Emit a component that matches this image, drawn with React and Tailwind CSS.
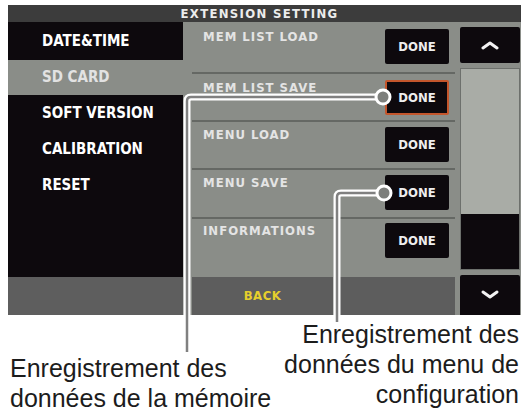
export default function App() {
  const lcd = { fontFamily: '"DejaVu Sans Condensed", "DejaVu Sans", sans-serif' };
  const menu = [
    { label: 'DATE&TIME', h: 'h-[38px]' },
    { label: 'SD CARD', h: 'h-[35px]', active: true },
    { label: 'SOFT VERSION', h: 'h-[36px]' },
    { label: 'CALIBRATION', h: 'h-[36px]' },
    { label: 'RESET', h: 'h-[36px]' },
  ];
  const rows = [
    { label: 'MEM LIST LOAD', h: 'h-[50px]', pt: 'pt-[7px]' },
    { label: 'MEM LIST SAVE', h: 'h-[48px]', pt: 'pt-[6px]', selected: true },
    { label: 'MENU LOAD', h: 'h-[48px]', pt: 'pt-[5px]' },
    { label: 'MENU SAVE', h: 'h-[49px]', pt: 'pt-[5px]' },
    { label: 'INFORMATIONS', h: 'h-[60px]', pt: 'pt-[4px]' },
  ];

  return (
    <div className="relative w-[523px] h-[412px] bg-white overflow-hidden pt-[5px] pl-[8px]">
      {/* screen */}
      <div className="w-[513px] h-[310px] bg-[#8a8d88] flex flex-col" style={lcd}>
        <div className="h-[17px] bg-[#3c3c3c] flex items-center justify-center pr-[10px] text-[13px] font-bold tracking-[1.3px] text-[#ececec] leading-none">
          EXTENSION SETTING
        </div>
        <div className="flex h-[293px]">
          {/* left menu */}
          <div className="w-[175px] bg-[#0d090d] flex flex-col">
            {menu.map((m) => (
              <div
                key={m.label}
                className={`${m.h} flex items-center pl-[34px] text-[15px] font-bold leading-none ${
                  m.active ? 'bg-[#8a8d88] text-[#e2e2e2]' : 'text-white'
                }`}
              >
                {m.label}
              </div>
            ))}
            <div className="flex-1" />
            <div className="h-[38px] bg-[#5e5e5e]" />
          </div>
          <div className="w-[9px]" />
          {/* content */}
          <div className="w-[263px] flex flex-col">
            {rows.map((r, i) => (
              <div
                key={r.label}
                className={`${r.h} ${r.pt} flex justify-between items-start pl-[11px] pr-[6px] ${
                  i > 0 ? 'border-t-2 border-[#656864]' : ''
                }`}
              >
                <span className="text-[13px] font-bold tracking-[1px] text-[#e4e4e4] leading-none mt-[1px]">{r.label}</span>
                <div
                  className={`w-[64px] h-[35px] bg-[#0d090d] rounded-[2px] flex items-center justify-center text-[13px] font-bold text-[#eeeeee] ${
                    r.selected ? 'border-2 border-[#c4562c]' : ''
                  }`}
                >
                  DONE
                </div>
              </div>
            ))}
            <div className="h-[38px] flex gap-[7px]">
              <div className="w-[141px] bg-[#5d5d5d] flex items-center justify-center text-[13px] font-bold tracking-[0.5px] text-[#e6cf2c]">
                BACK
              </div>
              <div className="flex-1 bg-[#5d5d5d]" />
            </div>
          </div>
          {/* scroll column */}
          <div className="flex-1 flex flex-col pl-[5px] pr-[1px]">
            <div className="h-[36px] mt-[5px] bg-[#0d090d] rounded-[2px] flex items-center justify-center">
              <svg width="20" height="10" viewBox="0 0 20 10">
                <polyline points="3,8 10,3 17,8" fill="none" stroke="#f2f2f2" strokeWidth="3" strokeLinecap="round" strokeLinejoin="round" />
              </svg>
            </div>
            <div className="h-[202px] mt-[5px] flex flex-col border border-[#6d706c]">
              <div className="h-[145px] bg-[#a9aca6]" />
              <div className="flex-1 bg-[#0d090d]" />
            </div>
            <div className="flex-1 mt-[5px] bg-[#0d090d] rounded-t-[2px] flex items-center justify-center">
              <svg width="20" height="10" viewBox="0 0 20 10">
                <polyline points="3,2 10,7 17,2" fill="none" stroke="#f2f2f2" strokeWidth="3" strokeLinecap="round" strokeLinejoin="round" />
              </svg>
            </div>
          </div>
        </div>
      </div>

      {/* captions */}
      <div
        className="flex justify-between text-[25px] leading-[30px] text-[#1c1c1c] pl-[2px] pr-[4px]"
        style={{ fontFamily: '"Liberation Sans", Arial, sans-serif' }}
      >
        <div className="mt-[38px]">
          Enregistrement des
          <br />
          données de la mémoire
        </div>
        <div className="mt-[4px] text-right">
          Enregistrement des
          <br />
          données du menu de
          <br />
          configuration
        </div>
      </div>

      {/* callout lines */}
      <svg className="absolute inset-0 pointer-events-none" width="523" height="412" viewBox="0 0 523 412">
        <path d="M376 97 H191 Q187 97 187 101 V352" fill="none" stroke="#ffffff" strokeWidth="7" />
        <path d="M377 193 H341 Q337 193 337 197 V322" fill="none" stroke="#ffffff" strokeWidth="7" />
        <path d="M376 97 H191 Q187 97 187 101 V352" fill="none" stroke="#808080" strokeWidth="2.5" />
        <path d="M377 193 H341 Q337 193 337 197 V322" fill="none" stroke="#808080" strokeWidth="2.5" />
        <circle cx="383" cy="97" r="7" fill="#7d7f7c" stroke="#ffffff" strokeWidth="3" />
        <circle cx="384" cy="193" r="7" fill="#7d7f7c" stroke="#ffffff" strokeWidth="3" />
      </svg>
    </div>
  );
}
